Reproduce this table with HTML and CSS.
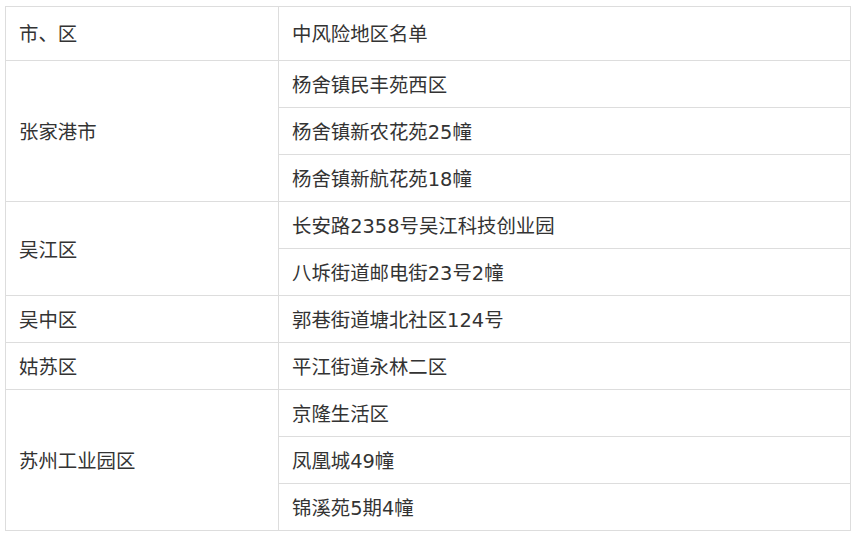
FILE: index.html
```html
<!DOCTYPE html>
<html lang="zh-CN">
<head>
<meta charset="utf-8">
<link rel="stylesheet" href="styles.css">
</head>
<body>
<div class="wrap">
<table class="risk">
  <colgroup><col class="c1"><col class="c2"></colgroup>
  <tr class="head"><td>市、区</td><td>中风险地区名单</td></tr>
  <tr><td rowspan="3">张家港市</td><td>杨舍镇民丰苑西区</td></tr>
  <tr><td>杨舍镇新农花苑25幢</td></tr>
  <tr><td>杨舍镇新航花苑18幢</td></tr>
  <tr><td rowspan="2">吴江区</td><td>长安路2358号吴江科技创业园</td></tr>
  <tr><td>八坼街道邮电街23号2幢</td></tr>
  <tr><td>吴中区</td><td>郭巷街道塘北社区124号</td></tr>
  <tr><td>姑苏区</td><td>平江街道永林二区</td></tr>
  <tr><td rowspan="3">苏州工业园区</td><td>京隆生活区</td></tr>
  <tr><td>凤凰城49幢</td></tr>
  <tr><td>锦溪苑5期4幢</td></tr>
</table>
</div>
</body>
</html>
```

FILE: styles.css
```css
html, body {
  margin: 0;
  padding: 0;
  background: #fff;
}
.wrap {
  padding: 6px 0 0 5px;
}
.risk {
  border-collapse: collapse;
  width: 846px;
  table-layout: fixed;
  font-family: "DejaVu Sans", "Noto Sans CJK SC", sans-serif;
  font-size: 19.4px;
  color: #333;
}
.c1 { width: 273px; }
.risk td {
  border: 1px solid #ddd;
  padding: 12px 13px 8px;
  line-height: 26px;
  height: 26px;
  vertical-align: middle;
  text-align: left;
}
.risk .head td {
  padding: 15px 13px 12px;
}
```
